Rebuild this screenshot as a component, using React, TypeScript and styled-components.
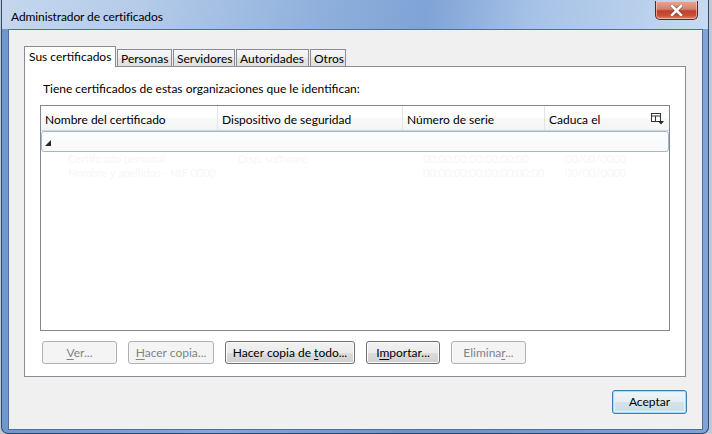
import React from "react";
import styled, { createGlobalStyle, css } from "styled-components";

const GlobalStyle = createGlobalStyle`
  html, body { margin: 0; padding: 0; }
  body {
    width: 712px;
    height: 434px;
    overflow: hidden;
    background: #c3c9d2;
    font-family: Lato, "Noto Sans", sans-serif;
    font-size: 12px;
    color: #000;
  }
  #root { display: flex; padding-left: 1px; }
`;

const Window = styled.div`
  width: 708px;
  height: 434px;
  box-sizing: border-box;
  display: flex;
  flex-direction: column;
  border: 1px solid #2d4a74;
  border-top: none;
  border-radius: 0 0 7px 7px;
  padding: 0 5px 3px 6px;
  background: linear-gradient(90deg, #6f97cc 0%, #82a7d8 30%, #6b93c8 60%, #7ea3d6 100%);
`;

const TitleBar = styled.div`
  height: 29px;
  display: flex;
  align-items: flex-start;
  justify-content: space-between;
  margin: 0 -5px 0 -6px;
  padding: 0 10px 0 9px;
  background: linear-gradient(100deg, #c4d7ee 0%, #b4cbe9 20%, #8fb0dc 45%, #7fa3d6 60%, #a6c2e6 75%, #b9d0ec 90%, #c8daef 100%);
`;

const Title = styled.div`
  padding-top: 9px;
  font-size: 12px;
  color: #000;
  letter-spacing: -0.1px;
`;

const CloseButton = styled.div`
  width: 43px;
  height: 19px;
  margin-top: 1px;
  box-sizing: border-box;
  border: 1px solid #53282a;
  border-top: none;
  border-radius: 0 0 5px 5px;
  background: linear-gradient(180deg, #e5a898 0%, #d7806d 45%, #c0412e 55%, #c84f36 80%, #e0856a 100%);
  box-shadow: inset 0 0 0 1px rgba(255, 220, 210, 0.55);
  display: flex;
  align-items: center;
  justify-content: center;
`;

const Client = styled.div`
  flex: 1;
  display: flex;
  flex-direction: column;
  background: #f0f0f0;
  border: 1px solid #4f6f9f;
  padding: 16px 16px 15px 15px;
`;

const TabStrip = styled.div`
  display: flex;
  align-items: flex-end;
  height: 20px;
  position: relative;
  z-index: 1;
`;

const Tab = styled.div<{ $active?: boolean; $w: number }>`
  box-sizing: border-box;
  width: ${(p) => p.$w}px;
  border: 1px solid #898c95;
  border-bottom: none;
  margin-right: 1px;
  padding-left: 3px;
  display: flex;
  align-items: center;
  white-space: nowrap;
  ${(p) =>
    p.$active
      ? css`
          height: 21px;
          margin-bottom: -1px;
          background: #fff;
          padding-left: 4px;
          padding-bottom: 2px;
        `
      : css`
          height: 17px;
          background: linear-gradient(180deg, #f6f6f6 0%, #efefef 50%, #e6e6e6 51%, #e0e0e0 100%);
          margin-bottom: 0;
        `}
`;

const TabPanel = styled.div`
  height: 311px;
  box-sizing: border-box;
  border: 1px solid #898c95;
  background: #fff;
  display: flex;
  flex-direction: column;
  padding: 13px 15px 0 15px;
`;

const Label = styled.div`
  line-height: 16px;
  padding-left: 3px;
  padding-top: 1px;
`;

const Tree = styled.div`
  margin-top: 8px;
  height: 226px;
  box-sizing: border-box;
  border: 1px solid #828790;
  background: #fff;
  display: flex;
  flex-direction: column;
`;

const HeaderRow = styled.div`
  display: grid;
  grid-template-columns: 177px 185px 142px 1fr 22px;
  height: 25px;
  box-sizing: border-box;
  background: linear-gradient(180deg, #ffffff 0%, #ffffff 50%, #f8f9fa 51%, #f3f4f6 100%);
  border-bottom: 1px solid #d5d5d5;
`;

const HeaderCell = styled.div<{ $divider?: boolean }>`
  display: flex;
  align-items: center;
  padding-left: 4px;
  padding-top: 2px;
  border-right: ${(p) => (p.$divider ? "1px solid #e3e4e6" : "none")};
  white-space: nowrap;
  overflow: hidden;
`;

const PickerCell = styled.div`
  display: flex;
  align-items: center;
  justify-content: center;
  padding-right: 2px;
  padding-top: 1px;
`;

const SelectedRow = styled.div`
  height: 21px;
  box-sizing: border-box;
  border: 1px solid #a3b5c9;
  border-radius: 3px;
  background: linear-gradient(180deg, #fdfdfe 0%, #f7f9fb 100%);
  display: flex;
  align-items: center;
  padding-left: 3px;
  padding-top: 3px;
`;

const GhostRow = styled.div`
  display: grid;
  grid-template-columns: 170px 185px 142px 1fr;
  height: 16px;
  margin-top: -2px;
  align-items: center;
  color: #f6f7f9;
  font-size: 11px;
  padding-left: 27px;
`;

const ButtonRow = styled.div`
  display: flex;
  gap: 11px;
  margin-top: 10px;
  padding-left: 2px;
`;

const Button = styled.button<{ $w: number; $h?: number; $disabled?: boolean; $default?: boolean }>`
  width: ${(p) => p.$w}px;
  height: ${(p) => p.$h ?? 23}px;
  box-sizing: border-box;
  font-family: inherit;
  font-size: 12px;
  padding: 0 0 1px 0;
  border-radius: 3px;
  display: flex;
  align-items: center;
  justify-content: center;
  white-space: pre;
  ${(p) =>
    p.$disabled
      ? css`
          border: 1px solid #adb2b5;
          background: #f4f4f4;
          color: #838383;
        `
      : p.$default
      ? css`
          border: 1px solid #3c7fb1;
          background: linear-gradient(180deg, #f0f6f9 0%, #e6eef2 50%, #d6e2e8 51%, #cddce3 100%);
          box-shadow: inset 0 0 0 1px #9fdcf6, inset 0 0 0 2px #e4f4fb;
          color: #000;
        `
      : css`
          border: 1px solid #707070;
          background: linear-gradient(180deg, #f2f2f2 0%, #ebebeb 50%, #dddddd 51%, #cfcfcf 100%);
          box-shadow: inset 0 0 0 1px #fcfcfc;
          color: #000;
        `}
`;

const Footer = styled.div`
  display: flex;
  justify-content: flex-end;
  margin-top: 13px;
  margin-right: -1px;
`;

const Mn = styled.span`
  text-decoration: underline;
  text-underline-offset: 2px;
`;

const CloseIcon = () => (
  <svg width="13" height="11" viewBox="0 0 13 11">
    <path d="M2 1 L11 10 M11 1 L2 10" stroke="#3a1a1a" strokeWidth="4" strokeLinecap="square" opacity="0.45" />
    <path d="M2 1 L11 10 M11 1 L2 10" stroke="#ffffff" strokeWidth="2.6" strokeLinecap="square" />
  </svg>
);

const PickerIcon = () => (
  <svg width="13" height="12" viewBox="0 0 13 12">
    <rect x="0.5" y="0.5" width="9" height="8" fill="#fff" stroke="#333" />
    <line x1="0.5" y1="3" x2="9.5" y2="3" stroke="#333" />
    <line x1="4.5" y1="3" x2="4.5" y2="8.5" stroke="#333" />
    <polygon points="7,8 13,8 10,11.5" fill="#222" />
  </svg>
);

const Twisty = () => (
  <svg width="6" height="6" viewBox="0 0 6 6">
    <polygon points="6,0 6,6 0,6" fill="#262626" />
  </svg>
);

const tabs = [
  { label: "Sus certificados", w: 92, active: true },
  { label: "Personas", w: 55 },
  { label: "Servidores", w: 62 },
  { label: "Autoridades", w: 73 },
  { label: "Otros", w: 36 },
];

export default function App() {
  return (
    <>
      <GlobalStyle />
      <Window>
        <TitleBar>
          <Title>Administrador de certificados</Title>
          <CloseButton>
            <CloseIcon />
          </CloseButton>
        </TitleBar>
        <Client>
          <TabStrip>
            {tabs.map((t) => (
              <Tab key={t.label} $active={t.active} $w={t.w}>
                {t.label}
              </Tab>
            ))}
          </TabStrip>
          <TabPanel>
            <Label>Tiene certificados de estas organizaciones que le identifican:</Label>
            <Tree>
              <HeaderRow>
                <HeaderCell $divider>Nombre del certificado</HeaderCell>
                <HeaderCell $divider>Dispositivo de seguridad</HeaderCell>
                <HeaderCell $divider>Número de serie</HeaderCell>
                <HeaderCell>Caduca el</HeaderCell>
                <PickerCell>
                  <PickerIcon />
                </PickerCell>
              </HeaderRow>
              <SelectedRow>
                <Twisty />
              </SelectedRow>
              <GhostRow>
                <span>Certificado personal</span>
                <span>Disp. software</span>
                <span>00:00:00:00:00:00:00</span>
                <span>00/00/0000</span>
              </GhostRow>
              <GhostRow>
                <span>Nombre y apellidos - NIF 0000</span>
                <span></span>
                <span>00:00:00:00:00:00:00:00</span>
                <span>00/00/0000</span>
              </GhostRow>
            </Tree>
            <ButtonRow>
              <Button $w={75} $disabled>
                <span><Mn>V</Mn>er...</span>
              </Button>
              <Button $w={86} $disabled>
                <span><Mn>H</Mn>acer copia...</span>
              </Button>
              <Button $w={130}>
                <span>Hacer copia de <Mn>t</Mn>odo...</span>
              </Button>
              <Button $w={74}>
                <span>I<Mn>m</Mn>portar...</span>
              </Button>
              <Button $w={75} $disabled>
                <span>Elimina<Mn>r</Mn>...</span>
              </Button>
            </ButtonRow>
          </TabPanel>
          <Footer>
            <Button $w={75} $h={24} $default>
              <span>Aceptar</span>
            </Button>
          </Footer>
        </Client>
      </Window>
    </>
  );
}
